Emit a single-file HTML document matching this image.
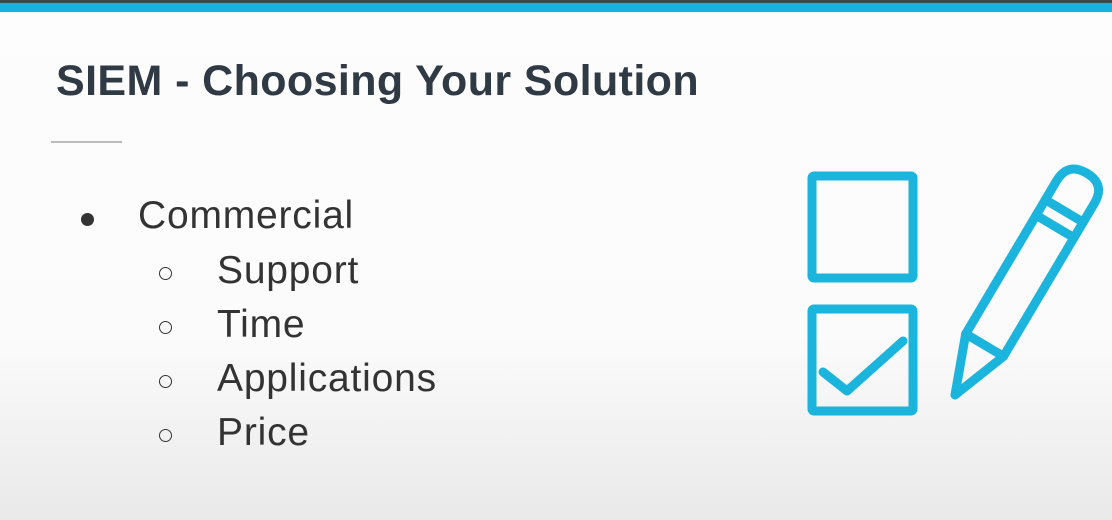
<!DOCTYPE html>
<html><head><meta charset="utf-8"><style>
html,body{margin:0;padding:0;width:1112px;height:520px;overflow:hidden;}
body{background:linear-gradient(#fdfdfd 0%,#fbfbfb 65%,#e9e9e9 100%);font-family:"Liberation Sans",sans-serif;position:relative;}
.top{position:absolute;left:0;top:0;width:1112px;height:3px;background:#3a4a52;}
.bar{position:absolute;left:0;top:3px;width:1112px;height:9px;background:#18b1e0;}
h1{position:absolute;left:56px;top:57px;margin:0;font-size:43px;font-weight:bold;color:#2f3a44;white-space:nowrap;letter-spacing:0.4px;}
.rule{position:absolute;left:51px;top:141px;width:71px;height:2px;background:#bbb;}
.t{position:absolute;font-size:39px;letter-spacing:0.8px;color:#333;white-space:nowrap;}
.dot{position:absolute;width:13px;height:13px;border-radius:50%;background:#333;}
.circ{position:absolute;width:11px;height:11px;border-radius:50%;border:1.5px solid #333;}
</style></head><body>
<div class="top"></div><div class="bar"></div>
<h1>SIEM - Choosing Your Solution</h1>
<div class="rule"></div>
<div class="dot" style="left:81px;top:213px"></div>
<div class="t" style="left:138px;top:194px">Commercial</div>
<div class="circ" style="left:159px;top:267px"></div>
<div class="t" style="left:217px;top:249px">Support</div>
<div class="circ" style="left:159px;top:321px"></div>
<div class="t" style="left:217px;top:303px">Time</div>
<div class="circ" style="left:159px;top:375px"></div>
<div class="t" style="left:217px;top:357px">Applications</div>
<div class="circ" style="left:159px;top:429px"></div>
<div class="t" style="left:217px;top:411px">Price</div>
<svg style="position:absolute;left:0;top:0" width="1112" height="520">
<g fill="none" stroke="#1ab4dd" stroke-width="9" stroke-linejoin="round" stroke-linecap="round">
<rect x="812" y="176" width="101" height="102" rx="2"/>
<rect x="812" y="309" width="101" height="102" rx="2"/>
<polyline points="823,372 847,391 903,341"/>
<g transform="translate(955,395) rotate(30.7)">
<path d="M0,0 L-22,-58 L-22,-236 Q-22,-258 0,-258 Q22,-258 22,-236 L22,-58 Z"/>
<line x1="-22" y1="-58" x2="22" y2="-58"/>
<line x1="-22" y1="-196" x2="22" y2="-196"/>
<line x1="-22" y1="-214" x2="22" y2="-214"/>
</g>
</g>
</svg>
</body></html>
